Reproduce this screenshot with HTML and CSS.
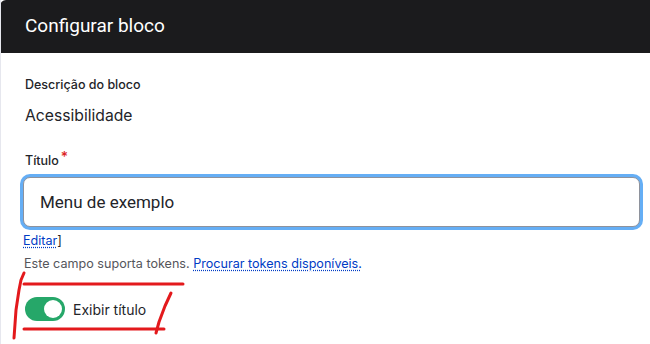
FILE: index.html
```html
<!DOCTYPE html>
<html lang="pt-BR">
<head>
    <meta charset="UTF-8">
    <meta name="viewport" content="width=device-width, initial-scale=1.0">
    <title>Configurar bloco</title>
    <link rel="stylesheet" href="styles.css">
</head>
<body>
    <div class="dialog">
        <div class="dialog-header">
            <h1>Configurar bloco</h1>
        </div>

        <div class="dialog-body">
            <div class="field">
                <div class="field-label">Descrição do bloco</div>
                <div class="field-value">Acessibilidade</div>
            </div>

            <div class="field field-title">
                <label for="title" class="field-label required">Título</label>
                <input type="text" id="title" class="text-input" value="Menu de exemplo">
                <div class="edit-line"><a href="#" class="link">Editar</a>]</div>
                <div class="description">Este campo suporta tokens. <a href="#" class="link">Procurar tokens disponíveis.</a></div>
            </div>

            <div class="toggle-row">
                <span class="toggle"><span class="knob"></span></span>
                <span class="toggle-label">Exibir título</span>
            </div>
        </div>

        <!-- hand drawn highlight over the toggle -->
        <svg class="marker" width="200" height="80" viewBox="0 0 200 80">
            <path d="M13 68 L15 40 L18 20 L20 10 L23 3" />
            <path d="M23 14 L182 14" />
            <path d="M23 59 L163 59" />
            <path d="M170 23 L164 36 L158 52 L155 63" />
        </svg>
    </div>
</body>
</html>
```

FILE: styles.css
```css
html, body {
    margin: 0;
    padding: 0;
    background: #fff;
}

body {
    font-family: Inter, "Noto Sans", sans-serif;
    color: #232429;
}

.dialog {
    position: relative;
    width: 650px;
    height: 344px;
    overflow: hidden;
    border-left: 1px solid #e6e7ee;
    box-sizing: border-box;
}

.dialog-header {
    background: #1b1b1d;
    height: 53px;
    border-top-left-radius: 6px;
    margin-left: -1px;
    display: flex;
    align-items: center;
    padding-left: 25px;
}

.dialog-header h1 {
    margin: 0;
    font-family: Roboto, "Liberation Sans", sans-serif;
    font-size: 19px;
    font-weight: 400;
    color: #fff;
    padding-bottom: 2px;
}

.dialog-body {
    padding: 23px 8px 0 24px;
}

.field-label {
    display: block;
    font-size: 12.5px;
    font-weight: 500;
    line-height: 18px;
    color: #232429;
}

.field-value {
    font-size: 15.7px;
    line-height: 20px;
    margin-top: 12px;
    color: #232429;
}

.field-title {
    margin-top: 22px;
}

.required::after {
    content: "*";
    color: #dc2323;
    font-size: 14px;
    margin-left: 2px;
    vertical-align: 3px;
}

.text-input {
    display: block;
    width: 617px;
    height: 50px;
    margin-top: 7px;
    margin-left: -2px;
    box-sizing: border-box;
    border: 1px solid #8e929c;
    border-radius: 7px;
    box-shadow: 0 0 0 3px #65aef5;
    padding: 0 16px;
    font-family: Roboto, "Liberation Sans", sans-serif;
    font-size: 17px;
    color: #232429;
    outline: none;
}

.edit-line {
    font-size: 12.6px;
    line-height: 16px;
    margin-top: 6px;
    margin-left: -2px;
    color: #232429;
}

.link {
    color: #003cc5;
    text-decoration: underline dotted;
    text-underline-offset: 2px;
}

.description {
    font-size: 12.6px;
    line-height: 16px;
    margin-top: 7px;
    margin-left: -1px;
    color: #55565b;
}

.toggle-row {
    display: flex;
    align-items: center;
    gap: 8px;
    margin-top: 25px;
}

.toggle {
    position: relative;
    display: inline-block;
    width: 40px;
    height: 24px;
    border-radius: 12px;
    background: #26a769;
}

.toggle .knob {
    position: absolute;
    top: 3px;
    right: 3px;
    width: 18px;
    height: 18px;
    border-radius: 50%;
    background: #fff;
}

.toggle-label {
    font-size: 14px;
    color: #232429;
}

.marker {
    position: absolute;
    left: 0;
    top: 270px;
}

.marker path {
    fill: none;
    stroke: #e3191c;
    stroke-width: 3;
    stroke-linecap: round;
    stroke-linejoin: round;
}
```
